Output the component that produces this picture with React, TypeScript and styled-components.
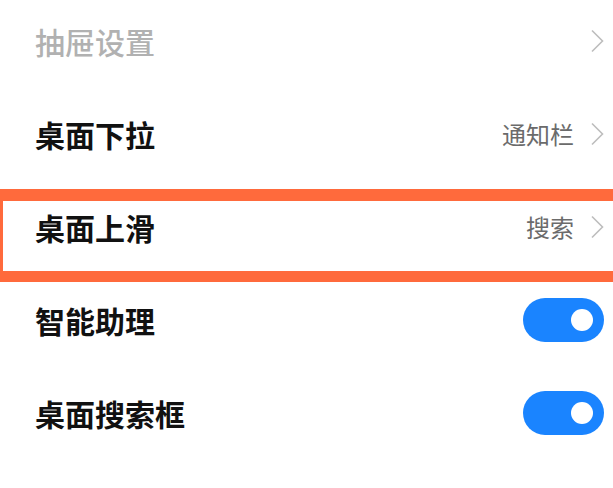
import React from 'react';
import styled, { createGlobalStyle } from 'styled-components';

const GlobalStyle = createGlobalStyle`
  html, body {
    margin: 0;
    padding: 0;
    background: #ffffff;
    overflow: hidden;
  }
  body {
    font-family: 'Noto Sans CJK SC', 'Noto Sans', sans-serif;
  }
`;

const Page = styled.div`
  width: 613px;
  height: 488px;
  overflow: hidden;
  background: #ffffff;
`;

const List = styled.div`
  position: relative;
  margin-top: -6px;
  display: flex;
  flex-direction: column;
`;

const Row = styled.div`
  height: 93px;
  display: flex;
  align-items: center;
  padding: 0 9px 0 35px;
`;

const Title = styled.div<{ $muted?: boolean }>`
  flex: 1;
  font-size: 30px;
  line-height: 1;
  font-weight: ${({ $muted }) => ($muted ? 500 : 600)};
  color: ${({ $muted }) => ($muted ? '#b1b1b1' : '#111111')};
`;

const Value = styled.span`
  font-size: 24px;
  line-height: 1;
  color: #6b6b6b;
  margin-right: 16px;
`;

const Chevron = styled.svg`
  width: 14px;
  height: 24px;
  display: block;
`;

const Toggle = styled.div`
  position: relative;
  width: 81px;
  height: 44px;
  border-radius: 22px;
  background: #1a84ff;
`;

const Knob = styled.span`
  position: absolute;
  top: 11px;
  right: 11px;
  width: 22px;
  height: 22px;
  border-radius: 50%;
  background: #ffffff;
`;

const Highlight = styled.div`
  position: absolute;
  left: 0;
  right: 0;
  top: 195px;
  height: 93px;
  box-sizing: border-box;
  border-style: solid;
  border-color: #ff6a3c;
  border-width: 12px 0 11px 3px;
  pointer-events: none;
`;

const Arrow = () => (
  <Chevron viewBox="0 0 14 24">
    <polyline
      points="2,1.5 12.5,12 2,22.5"
      fill="none"
      stroke="#bdbdbd"
      strokeWidth="1.6"
      strokeLinejoin="miter"
    />
  </Chevron>
);

type Item = {
  title: string;
  muted?: boolean;
  value?: string;
  toggle?: boolean;
};

const items: Item[] = [
  { title: '抽屉设置', muted: true },
  { title: '桌面下拉', value: '通知栏' },
  { title: '桌面上滑', value: '搜索' },
  { title: '智能助理', toggle: true },
  { title: '桌面搜索框', toggle: true },
];

export default function App() {
  return (
    <Page>
      <GlobalStyle />
      <List>
        {items.map((item) => (
          <Row key={item.title}>
            <Title $muted={item.muted}>{item.title}</Title>
            {item.value && <Value>{item.value}</Value>}
            {item.toggle ? (
              <Toggle>
                <Knob />
              </Toggle>
            ) : (
              <Arrow />
            )}
          </Row>
        ))}
        <Highlight />
      </List>
    </Page>
  );
}
